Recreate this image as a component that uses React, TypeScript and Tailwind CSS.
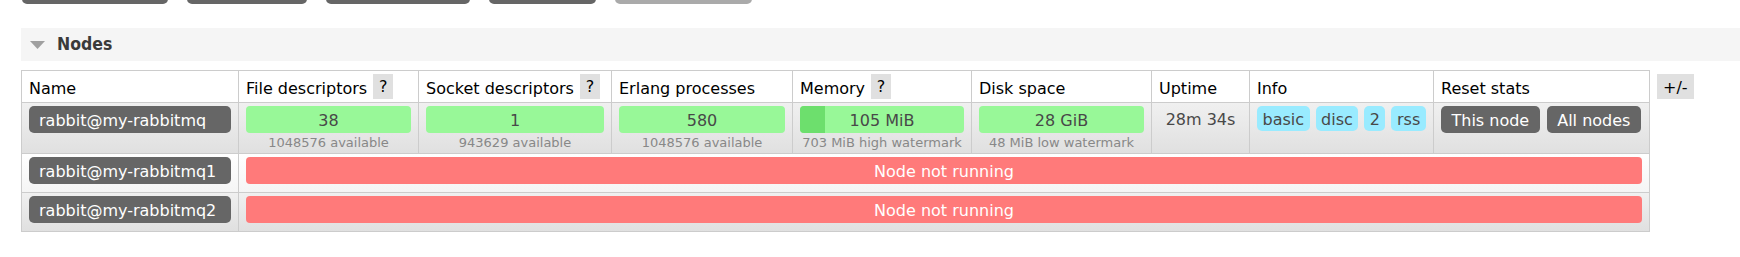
const columns = [
  { label: 'Name' },
  { label: 'File descriptors', help: true },
  { label: 'Socket descriptors', help: true },
  { label: 'Erlang processes' },
  { label: 'Memory', help: true },
  { label: 'Disk space' },
  { label: 'Uptime' },
  { label: 'Info' },
  { label: 'Reset stats' },
]

const stats = [
  { value: '38', sub: '1048576 available' },
  { value: '1', sub: '943629 available' },
  { value: '580', sub: '1048576 available' },
  { value: '105 MiB', sub: '703 MiB high watermark', fill: true },
  { value: '28 GiB', sub: '48 MiB low watermark' },
]

const topButtons = [
  { w: 'w-[146px]', bg: 'bg-[#666]' },
  { w: 'w-[120px]', bg: 'bg-[#666]' },
  { w: 'w-[144px]', bg: 'bg-[#666]' },
  { w: 'w-[107px]', bg: 'bg-[#666]' },
  { w: 'w-[137px]', bg: 'bg-[#aaa]' },
]

const tags = ['basic', 'disc', '2', 'rss']

function NodeName({ name }: { name: string }) {
  return (
    <div className="block h-[27px] rounded-[5px] bg-[#666] pl-[10px] leading-[30px] whitespace-nowrap text-white">
      {name}
    </div>
  )
}

function StatCell({ value, sub, fill }: { value: string; sub: string; fill?: boolean }) {
  return (
    <div className="border-r border-[#ccc] px-[7px] pt-[3px]">
      <div className="relative h-[27px] overflow-hidden rounded-[4px] bg-[#98f898] text-center leading-[30px]">
        {fill && <div className="absolute inset-y-0 left-0 w-[25px] bg-[#6ddf6d]" />}
        <span className="relative">{value}</span>
      </div>
      <div className="text-center text-[13px] leading-[20px] whitespace-nowrap text-[#888]">{sub}</div>
    </div>
  )
}

function DownRow({ name, bg }: { name: string; bg: string }) {
  return (
    <div className={`grid grid-cols-[217px_180px_193px_181px_179px_180px_98px_184px_216px] border-b border-[#ccc] ${bg}`}>
      <div className="border-r border-[#ccc] px-[7px] pt-[3px] pb-[8px]">
        <NodeName name={name} />
      </div>
      <div className="col-span-8 border-r border-[#ccc] px-[7px] pt-[3px]">
        <div className="h-[27px] rounded-[4px] bg-[#ff7a7a] text-center leading-[30px] text-white">
          Node not running
        </div>
      </div>
    </div>
  )
}

export default function App() {
  return (
    <div className="flow-root min-h-[257px] bg-white pl-[21px] font-['DejaVu_Sans',Verdana,sans-serif] text-[16px] text-[#484848]">
      <div className="-mt-[26px] flex gap-[19px] pl-[1px]">
        {topButtons.map((b, i) => (
          <div key={i} className={`h-[30px] rounded-[5px] ${b.w} ${b.bg}`} />
        ))}
      </div>

      <div className="mt-[24px] flex h-[33px] items-center bg-[#f5f5f5] pl-[9px]">
        <svg width="15" height="8" viewBox="0 0 15 8">
          <polygon points="0,0 15,0 7.5,8" fill="#a0a0a0" />
        </svg>
        <span className="ml-[12px] font-['DejaVu_Sans_Condensed',Roboto,sans-serif] text-[17.5px] font-bold text-[#3a3a3a]">
          Nodes
        </span>
      </div>

      <div className="mt-[9px] flex items-start">
        <div className="border-l border-t border-[#ccc]">
          <div className="grid grid-cols-[217px_180px_193px_181px_179px_180px_98px_184px_216px] border-b border-[#ccc] bg-white text-black">
            {columns.map((c) => (
              <div key={c.label} className="flex h-[31px] items-center border-r border-[#ccc] px-[7px]">
                <span className="pt-[4px] leading-[19px] whitespace-nowrap">{c.label}</span>
                {c.help && (
                  <span className="ml-[6px] flex h-[25px] w-[20px] items-center justify-center bg-[#e0e0e0]">?</span>
                )}
              </div>
            ))}
          </div>

          <div className="grid grid-cols-[217px_180px_193px_181px_179px_180px_98px_184px_216px] border-b border-[#ccc] bg-linear-to-b from-[#f0f0f0] to-[#e0e0e0]">
            <div className="border-r border-[#ccc] px-[7px] pt-[3px]">
              <NodeName name="rabbit@my-rabbitmq" />
            </div>
            {stats.map((s) => (
              <StatCell key={s.sub + s.value} value={s.value} sub={s.sub} fill={s.fill} />
            ))}
            <div className="border-r border-[#ccc] pt-[3px]">
              <div className="h-[27px] text-center leading-[28px] whitespace-nowrap">28m 34s</div>
            </div>
            <div className="border-r border-[#ccc] px-[7px] pt-[3px]">
              <div className="flex gap-[6px]">
                {tags.map((t) => (
                  <span key={t} className="h-[25px] shrink-0 rounded-[5px] bg-[#99ebff] px-[5.5px] leading-[28px]">
                    {t}
                  </span>
                ))}
              </div>
            </div>
            <div className="border-r border-[#ccc] pl-[7px] pt-[3px]">
              <div className="flex gap-[7px]">
                <span className="h-[27px] shrink-0 rounded-[5px] bg-[#666] px-[10.5px] leading-[30px] whitespace-nowrap text-white">
                  This node
                </span>
                <span className="h-[27px] shrink-0 rounded-[5px] bg-[#666] px-[10.5px] leading-[30px] whitespace-nowrap text-white">
                  All nodes
                </span>
              </div>
            </div>
          </div>

          <DownRow name="rabbit@my-rabbitmq1" bg="bg-linear-to-b from-[#ffffff] to-[#f5f5f5]" />
          <DownRow name="rabbit@my-rabbitmq2" bg="bg-linear-to-b from-[#f0f0f0] to-[#e0e0e0]" />
        </div>

        <div className="mt-[4px] ml-[7px] h-[25px] bg-[#e0e0e0] px-[6px] leading-[27px] text-black">+/-</div>
      </div>
    </div>
  )
}
